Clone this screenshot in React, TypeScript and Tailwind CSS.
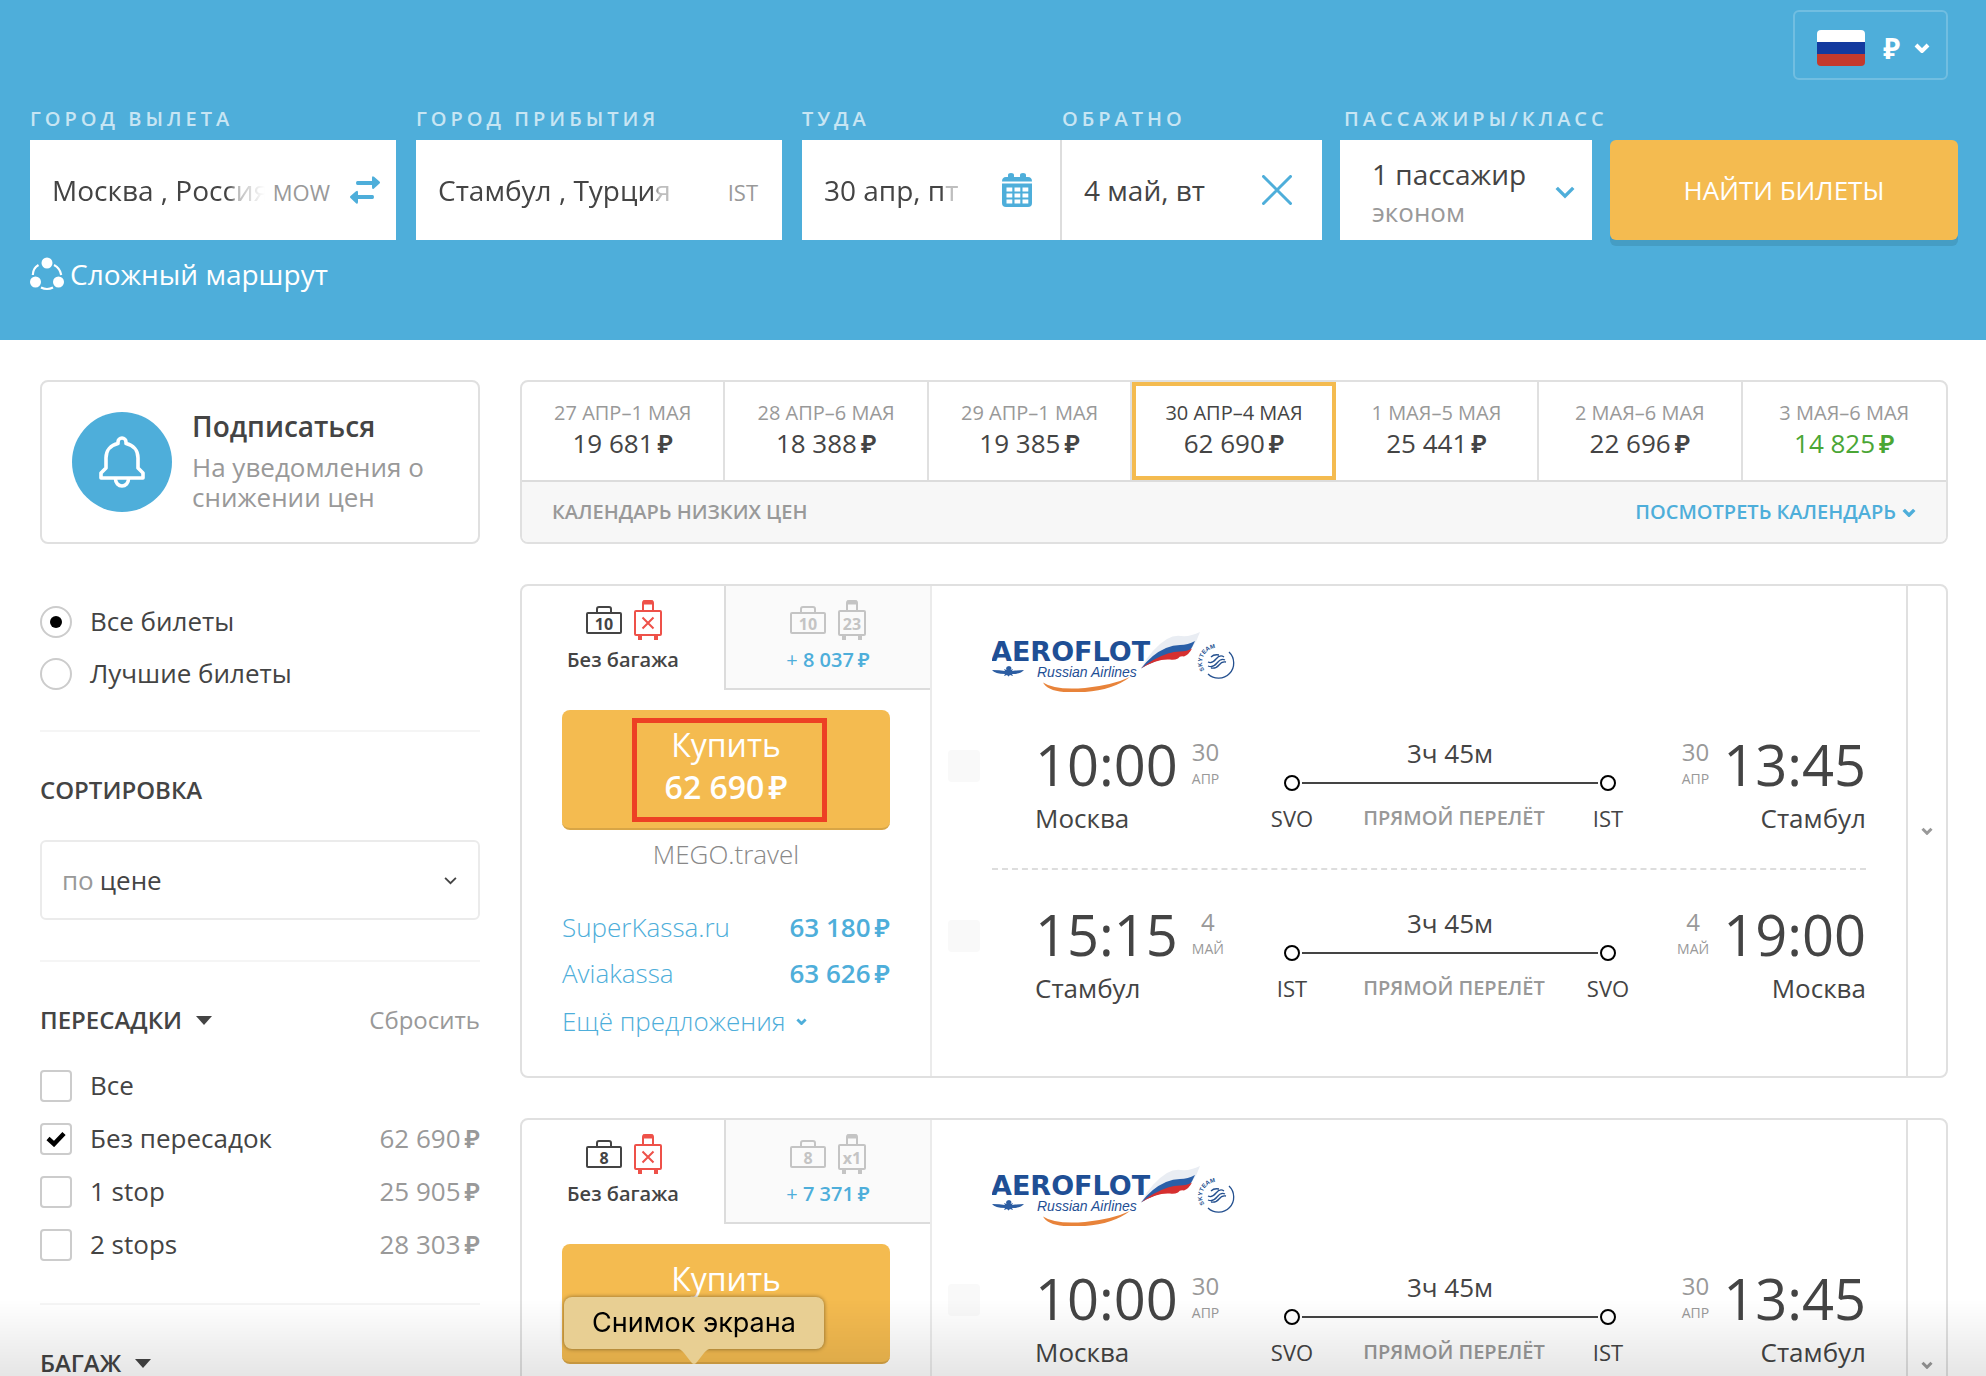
import React, { FC, ReactNode, useState } from "react";

interface IPrice {
	value: string;
	className?: string;
}

interface IBaggage {
	hand: string;
	bag: string;
	extra: string;
}

interface ILeg {
	from: string;
	to: string;
	fromCode: string;
	toCode: string;
	depart: string;
	arrive: string;
	day: string;
	month: string;
}

const CALENDAR = [
	{ dates: "27 АПР–1 МАЯ", price: "19 681" },
	{ dates: "28 АПР–6 МАЯ", price: "18 388" },
	{ dates: "29 АПР–1 МАЯ", price: "19 385" },
	{ dates: "30 АПР–4 МАЯ", price: "62 690" },
	{ dates: "1 МАЯ–5 МАЯ", price: "25 441" },
	{ dates: "2 МАЯ–6 МАЯ", price: "22 696" },
	{ dates: "3 МАЯ–6 МАЯ", price: "14 825", best: true },
];

const STOPS = [
	{ id: "all", label: "Все", price: "" },
	{ id: "direct", label: "Без пересадок", price: "62 690" },
	{ id: "one", label: "1 stop", price: "25 905" },
	{ id: "two", label: "2 stops", price: "28 303" },
];

const LEGS: ILeg[] = [
	{
		from: "Москва",
		to: "Стамбул",
		fromCode: "SVO",
		toCode: "IST",
		depart: "10:00",
		arrive: "13:45",
		day: "30",
		month: "АПР",
	},
	{
		from: "Стамбул",
		to: "Москва",
		fromCode: "IST",
		toCode: "SVO",
		depart: "15:15",
		arrive: "19:00",
		day: "4",
		month: "МАЙ",
	},
];

const Price: FC<IPrice> = ({ value, className = "" }) => (
	<span className={`whitespace-nowrap ${className}`}>
		{value}
		<span className="ml-1 font-semibold">₽</span>
	</span>
);

const Chevron: FC<{ className: string; width?: number }> = ({ className, width = 4 }) => (
	<svg viewBox="0 0 16 10" className={className} fill="none" stroke="currentColor" strokeWidth={width} aria-hidden="true">
		<path d="M2 2l6 6 6-6" />
	</svg>
);

const SwapIcon = () => (
	<svg viewBox="0 0 30 28" className="h-7 w-[30px] shrink-0 fill-[#4eaeda]" aria-hidden="true">
		<path d="M7.500 5H22V2q0-3 2-1.200l5.500 4.700q1 1 0 2L24 12.500q-2 1.500-2-1.500V9H7.500q-1.500 0-1.500-2t1.500-2z" />
		<path d="M22.500 19H8v-2.500q0-3-2-1.200L.5 20q-1 1 0 2L6 27.200q2 1.500 2-1.500V23h14.500q1.500 0 1.500-2t-1.500-2z" />
	</svg>
);

const CalendarIcon = () => (
	<svg viewBox="0 0 30 34" className="h-[34px] w-[30px] shrink-0" aria-hidden="true">
		<path fill="#4eaeda" d="M6 4V2q0-2 3-2t3 2v2h6V2q0-2 3-2t3 2v2h2q4 0 4 4.500H0Q0 4 4 4z" />
		<path fill="#4eaeda" d="M0 10.500h30V30q0 4-4 4H4q-4 0-4-4z" />
		{[14.5, 20.5, 26.5].map((y) =>
			[4.5, 12.5, 20.5].map((x) => <rect key={`${x}-${y}`} x={x} y={y} width="5.8" height="4" fill="#fff" />)
		)}
	</svg>
);

const HandBag: FC<{ text: string; className: string }> = ({ text, className }) => (
	<svg viewBox="0 0 36 40" className={`h-10 w-9 ${className}`} aria-hidden="true">
		<path d="M11 13V9q0-2 2-2h10q2 0 2 2v4" fill="none" stroke="currentColor" strokeWidth="2" />
		<rect x="1" y="13" width="34" height="20" rx="1" fill="none" stroke="currentColor" strokeWidth="2" />
		<text x="18" y="29.500" textAnchor="middle" fontSize="16" fontWeight="700" fill="currentColor">
			{text}
		</text>
	</svg>
);

const Suitcase: FC<{ text?: string; className: string }> = ({ text, className }) => (
	<svg viewBox="0 0 28 40" className={`h-10 w-7 ${className}`} aria-hidden="true">
		<path d="M9 11V3q0-2 2-2h6q2 0 2 2v8" fill="none" stroke="currentColor" strokeWidth="2" />
		<path d="M9 2.500h10M6 35.500v4.500M22 35.500v4.500" stroke="currentColor" strokeWidth="4" />
		<rect x="1" y="11" width="26" height="24" rx="1" fill="none" stroke="currentColor" strokeWidth="2" />
		{text ? (
			<text x="14" y="29.500" textAnchor="middle" fontSize="16" fontWeight="700" fill="currentColor">
				{text}
			</text>
		) : (
			<path d="M8.500 17.500l11 11m0-11l-11 11" stroke="currentColor" strokeWidth="2" />
		)}
	</svg>
);

const AeroflotLogo = () => (
	<svg viewBox="0 0 244 60" className="h-[60px] w-[244px]" role="img" aria-label="Aeroflot">
		<defs>
			<path id="skyteam-arc" d="M212.500 38A13 13 0 0 1 236 22.500" />
		</defs>
		<text x="-1" y="28.500" fontFamily="DejaVu Sans" fontWeight="700" fontSize="27" fill="#1f4f95">
			AEROFLOT
		</text>
		<text x="45" y="44.500" fontFamily="Liberation Sans" fontStyle="italic" fontSize="14" fill="#1f4f95">
			Russian Airlines
		</text>
		<path d="M51 50.500q12 8 42 5.500 28-3 45-11-17 13-45 15-36 2.500-42-9.500z" fill="#e8833a" />
		<path d="M149 36.500Q160 16 175 7q7-4 14-3 9 1 19-4-3 9-8 16l-21 6q-16 4-30 14.500z" fill="#e9edf3" />
		<path d="M149 36.500Q160 22 174 16q7-3 14-3 8 0 15-4-3 7-6 11l-18 5q-17 3-30 11.500z" fill="#2a5fa8" />
		<path d="M149 36.500Q162 26 176 21.500q6-2 12-2 7 0 12-3-3 6-8 8-4-1-6 2-4 2-8 1-13-1-29 9z" fill="#d62f2f" />
		<path
			d="M0 38q8 0 13 1l-1-2 2.500 1Q13 34.500 17 34q4 1 1.500 4l2.500-1-1 2q6-1 12-1-3 4-12 4l1 2-3-1-1.500 1.500L15 43l-3 1 1-2Q3 42 0 38z"
			fill="#2c5da2"
		/>
		<path d="M237 20a15 15 0 0 1-21 22" fill="none" stroke="#24508f" strokeWidth="1.300" />
		<text fontFamily="Liberation Sans" fontWeight="700" fontSize="6" fill="#24508f">
			<textPath href="#skyteam-arc">SKYTEAM</textPath>
		</text>
		<path
			d="M216 30q4 2 8-3t8-2m-16 9q5 2 9-3t8-3m-14 8q5 1 8-3t7-3m-15-5q3-3 8-2"
			fill="none"
			stroke="#24508f"
			strokeWidth="1.300"
		/>
	</svg>
);

const FieldLabel: FC<{ htmlFor: string; children: ReactNode }> = ({ htmlFor, children }) => (
	<label
		htmlFor={htmlFor}
		className="mb-[7px] block text-[20px] leading-7 font-semibold tracking-[4px] whitespace-nowrap text-white/70"
	>
		{children}
	</label>
);

const Header = () => (
	<header className="bg-[#4eaeda] pt-[10px] pr-7 pb-12 pl-[30px]">
		<div className="flex justify-end pr-[10px]">
			<button
				type="button"
				aria-label="Страна и валюта"
				className="flex h-[70px] items-center rounded-md border-2 border-white/20 pt-1.5 pr-4 pl-[22px] text-white"
			>
				<svg viewBox="0 0 48 36" className="mr-[18px] h-9 w-12 rounded" aria-hidden="true">
					<path d="M0 0h48v12H0z" fill="#fff" />
					<path d="M0 12h48v12H0z" fill="#133a9f" />
					<path d="M0 24h48v12H0z" fill="#c43a2d" />
				</svg>
				<span className="mr-[14px] text-[28px] leading-9 font-bold">₽</span>
				<Chevron className="h-[10px] w-4" />
			</button>
		</div>

		<form className="mt-[25px] grid grid-cols-[1292fr_252fr_348fr] gap-x-[18px]">
			<div className="grid grid-cols-[366fr_366fr_520fr] gap-x-5">
				<div className="min-w-0">
					<FieldLabel htmlFor="from">ГОРОД ВЫЛЕТА</FieldLabel>
					<div className="flex h-[100px] items-center bg-white pr-4 pl-[22px]">
						<input
							id="from"
							defaultValue="Москва , Россия"
							className="w-full min-w-0 flex-1 text-[28px] outline-none [mask-image:linear-gradient(to_right,black_calc(100%-38px),rgb(0_0_0/0.35)_calc(100%-26px),transparent)]"
						/>
						<span className="ml-2 pt-1 text-[22px] text-[#999]">MOW</span>
						<button type="button" aria-label="Поменять местами" className="ml-5">
							<SwapIcon />
						</button>
					</div>
				</div>
				<div className="min-w-0">
					<FieldLabel htmlFor="to">ГОРОД ПРИБЫТИЯ</FieldLabel>
					<div className="flex h-[100px] items-center bg-white pr-6 pl-[22px]">
						<input
							id="to"
							defaultValue="Стамбул , Турция"
							className="w-full min-w-0 flex-1 text-[28px] outline-none [mask-image:linear-gradient(to_right,black_calc(100%-60px),rgb(0_0_0/0.35)_calc(100%-58px))]"
						/>
						<span className="ml-3 pt-1 text-[22px] text-[#999]">IST</span>
					</div>
				</div>
				<div className="grid min-w-0 grid-cols-2">
					<div className="min-w-0">
						<FieldLabel htmlFor="there">ТУДА</FieldLabel>
						<div className="flex h-[100px] items-center border-r-2 border-[#ddd] bg-white pr-7 pl-[22px]">
							<input
								id="there"
								defaultValue="30 апр, пт"
								className="w-full min-w-0 flex-1 text-[28px] outline-none [mask-image:linear-gradient(to_right,black_calc(100%-58px),rgb(0_0_0/0.35)_calc(100%-56px))]"
							/>
							<CalendarIcon />
						</div>
					</div>
					<div className="min-w-0">
						<FieldLabel htmlFor="back">ОБРАТНО</FieldLabel>
						<div className="flex h-[100px] items-center bg-white pr-[30px] pl-[22px]">
							<input
								id="back"
								defaultValue="4 май, вт"
								className="w-full min-w-0 flex-1 text-[28px] outline-none"
							/>
							<button type="button" aria-label="Очистить">
								<svg viewBox="0 0 30 30" className="size-[30px]" aria-hidden="true">
									<path
										d="M1.500 1.500l27 27m0-27l-27 27"
										stroke="#4eaeda"
										strokeWidth="3"
										strokeLinecap="round"
									/>
								</svg>
							</button>
						</div>
					</div>
				</div>
			</div>

			<div className="min-w-0">
				<div className="pl-1">
					<FieldLabel htmlFor="passengers">ПАССАЖИРЫ/КЛАСС</FieldLabel>
				</div>
				<button
					id="passengers"
					type="button"
					className="flex h-[100px] w-full items-center justify-between bg-white pt-1 pr-4 pl-8 text-left"
				>
					<span>
						<span className="block text-[28px] leading-10">1 пассажир</span>
						<span className="block text-[26px] leading-9 text-[#999]">эконом</span>
					</span>
					<Chevron className="h-[14px] w-[22px] text-[#4eaeda]" width={2.5} />
				</button>
			</div>

			<button
				type="submit"
				className="mt-[35px] h-[100px] rounded-md bg-[#f4bb50] text-[26px] text-white shadow-[0_6px_0_#459dc4]"
			>
				НАЙТИ БИЛЕТЫ
			</button>
		</form>

		<a href="#multi" className="mt-4 flex w-fit items-center text-[28px] leading-9 text-white">
			<svg viewBox="0 0 34 34" className="mr-1.5 h-[34px] w-[34px]" aria-hidden="true">
				<circle cx="17" cy="6" r="5.500" fill="#fff" />
				<circle cx="5.500" cy="25" r="5.500" fill="#fff" />
				<circle cx="28.500" cy="25" r="5.500" fill="#fff" />
				<path
					d="M8.500 8Q3 11 2.800 18M24 8q6 3 7.200 10M11 30.500q6 3 12 0"
					fill="none"
					stroke="#fff"
					strokeWidth="2.200"
				/>
			</svg>
			Сложный маршрут
		</a>
	</header>
);

const Section: FC<{ children: ReactNode }> = ({ children }) => (
	<section className="mt-10 border-t-2 border-[#f5f5f5] pt-[42px]">{children}</section>
);

const Triangle = () => (
	<svg viewBox="0 0 16 9" className="ml-[14px] h-[9px] w-4 fill-current" aria-hidden="true">
		<path d="M0 0h16L8 9z" />
	</svg>
);

const Sidebar = () => {
	const [mode, setMode] = useState<string>("all");
	const [stops, setStops] = useState<string[]>(["direct"]);

	const toggleStop = (id: string) => {
		setStops(stops.includes(id) ? stops.filter((s) => s !== id) : [...stops, id]);
	};

	return (
		<aside className="w-[440px] shrink-0 text-[26px]">
			<button
				type="button"
				className="flex h-[164px] w-full items-center gap-5 rounded-lg border-2 border-[#e0e0e0] pl-[30px] text-left"
			>
				<span className="flex size-[100px] shrink-0 items-center justify-center rounded-full bg-[#4eaeda]">
					<svg viewBox="0 0 46 52" className="h-[52px] w-[46px]" fill="none" stroke="#fff" strokeWidth="3.600" aria-hidden="true">
						<path
							strokeLinejoin="round"
							d="M2 42v-5l5-5V22C7 14 12 9 19 7.500V6a4 4 0 0 1 8 0v1.500C34 9 39 14 39 22v10l5 5v5z"
						/>
						<path d="M16.500 43a6.500 7 0 0 0 13 0" />
					</svg>
				</span>
				<span className="pb-1">
					<span className="block text-[28px] leading-9 font-semibold">Подписаться</span>
					<span className="mt-2 block leading-[30px] text-[#999]">
						На уведомления о<br />
						снижении цен
					</span>
				</span>
			</button>

			<div className="mt-[62px] flex flex-col gap-5">
				{[
					{ id: "all", label: "Все билеты" },
					{ id: "best", label: "Лучшие билеты" },
				].map((item) => (
					<label key={item.id} className="flex h-8 items-center">
						<input
							type="radio"
							name="mode"
							checked={mode === item.id}
							onChange={() => setMode(item.id)}
							className="mr-[18px] grid size-8 appearance-none place-content-center rounded-full border-2 border-[#ccc] before:size-3 before:rounded-full checked:before:bg-black"
						/>
						<span className="pb-0.5">{item.label}</span>
					</label>
				))}
			</div>

			<Section>
				<h2 className="text-[24px] leading-8 font-semibold">СОРТИРОВКА</h2>
				<div className="relative mt-[34px] flex h-20 items-center rounded-md border-2 border-[#ebebeb] pl-5">
					<label htmlFor="sort" className="text-[#999]">
						по
					</label>
					<select id="sort" className="h-full flex-1 appearance-none pl-1.5 outline-none">
						<option>цене</option>
					</select>
					<Chevron className="pointer-events-none absolute right-5 h-[9px] w-[15px]" width={2} />
				</div>
			</Section>

			<Section>
				<div className="flex items-center leading-8">
					<h2 className="text-[24px] font-semibold">ПЕРЕСАДКИ</h2>
					<Triangle />
					<button type="button" className="ml-auto text-[24px] text-[#999]">
						Сбросить
					</button>
				</div>
				<div className="mt-[34px] flex flex-col gap-[21px] pb-0.5">
					{STOPS.map((stop) => (
						<label key={stop.id} className="relative flex h-8 items-center">
							<input
								type="checkbox"
								checked={stops.includes(stop.id)}
								onChange={() => toggleStop(stop.id)}
								className="peer mr-[18px] size-8 appearance-none rounded border-2 border-[#ccc]"
							/>
							<svg
								viewBox="0 0 20 16"
								className="absolute left-1.5 hidden h-4 w-5 peer-checked:block"
								fill="none"
								stroke="#000"
								strokeWidth="4.500"
								aria-hidden="true"
							>
								<path d="M2 7.500l6 5.500L18 2.500" />
							</svg>
							<span className="pb-0.5">{stop.label}</span>
							{stop.price && <Price value={stop.price} className="ml-auto pb-0.5 text-[#999]" />}
						</label>
					))}
				</div>
			</Section>

			<Section>
				<div className="flex items-center leading-8">
					<h2 className="text-[24px] font-semibold">БАГАЖ</h2>
					<Triangle />
				</div>
			</Section>
		</aside>
	);
};

const PriceCalendar = () => {
	const [selected, setSelected] = useState<number>(3);

	return (
		<section className="flex h-[164px] flex-col overflow-hidden rounded-lg border-2 border-[#e0e0e0]">
			<div className="grid h-[100px] grid-cols-7 border-b-2 border-[#dcdcdc]">
				{CALENDAR.map((item, i) => (
					<button
						key={item.dates}
						type="button"
						onClick={() => setSelected(i)}
						className={
							i === selected
								? "border-4 border-[#f4bb50] pb-1"
								: "border-r-2 border-[#e0e0e0] pb-1 last:border-r-0"
						}
					>
						<span className={`block text-[20px] leading-7 ${i === selected ? "" : "text-[#999]"}`}>{item.dates}</span>
						<Price value={item.price} className={`block text-[26px] leading-8 ${item.best ? "text-[#4aa635]" : ""}`} />
					</button>
				))}
			</div>
			<div className="flex flex-1 items-center justify-between bg-[#f7f7f7] px-[30px] text-[20px] font-semibold">
				<h2 className="text-[#999]">КАЛЕНДАРЬ НИЗКИХ ЦЕН</h2>
				<a href="#calendar" className="flex items-center gap-1.5 text-[#4eaeda]">
					ПОСМОТРЕТЬ КАЛЕНДАРЬ
					<Chevron className="h-[9px] w-[14px]" />
				</a>
			</div>
		</section>
	);
};

const DateMark: FC<{ day: string; month: string }> = ({ day, month }) => (
	<span className="text-center text-[#999]">
		<span className="block text-[24px] leading-[30px]">{day}</span>
		<span className="block text-[14px] leading-6">{month}</span>
	</span>
);

const Leg: FC<{ leg: ILeg }> = ({ leg }) => (
	<div className="flex">
		<div className="mt-[18px] mr-[55px] size-8 shrink-0 rounded bg-[#f9f9f9]" />
		<div className="w-[227px]">
			<div className="flex h-16 items-center gap-[14px]">
				<span className="text-[56px] leading-[64px]">{leg.depart}</span>
				<DateMark day={leg.day} month={leg.month} />
			</div>
			<p className="mt-1 text-[26px] leading-9">{leg.from}</p>
		</div>
		<div className="flex-1">
			<div className="h-16 pt-[3px]">
				<p className="text-center text-[26px] leading-9">3ч 45м</p>
				<div className="mt-1 flex items-center gap-0.5 px-[22px]">
					<span className="size-4 rounded-full border-2 border-black" />
					<span className="h-0.5 flex-1 bg-[#444]" />
					<span className="size-4 rounded-full border-2 border-black" />
				</div>
			</div>
			<div className="mt-1 grid grid-cols-[60px_1fr_60px] text-center text-[22px] leading-9">
				<span>{leg.fromCode}</span>
				<span className="pl-2 text-[20px] font-semibold text-[#999]">ПРЯМОЙ ПЕРЕЛЁТ</span>
				<span>{leg.toCode}</span>
			</div>
		</div>
		<div className="w-[228px]">
			<div className="flex h-16 items-center justify-end gap-[14px]">
				<DateMark day={leg.day} month={leg.month} />
				<span className="text-[56px] leading-[64px]">{leg.arrive}</span>
			</div>
			<p className="mt-1 text-right text-[26px] leading-9">{leg.to}</p>
		</div>
	</div>
);

const Ticket: FC<{ baggage: IBaggage; marked?: boolean }> = ({ baggage, marked }) => (
	<article className="flex rounded-lg border-2 border-[#e0e0e0]">
		<div className="w-[410px] shrink-0 border-r-2 border-[#ebebeb]">
			<div className="grid h-[104px] grid-cols-[202px_1fr] text-[20px] leading-6">
				<button type="button" className="flex flex-col items-center pt-[14px]">
					<span className="flex gap-3 pl-0.5">
						<HandBag text={baggage.hand} className="text-[#444]" />
						<Suitcase className="text-[#ee5149]" />
					</span>
					<span className="mt-2 font-semibold">Без багажа</span>
				</button>
				<button
					type="button"
					className="flex flex-col items-center border-b-2 border-l-2 border-[#dcdcdc] bg-[#fafafa] pt-[14px]"
				>
					<span className="flex gap-3 text-[#c4c4c4]">
						<HandBag text={baggage.hand} className="" />
						<Suitcase text={baggage.bag} className="" />
					</span>
					<span className="mt-2 text-[#4eaeda]">
						+ <Price value={baggage.extra} className="font-semibold" />
					</span>
				</button>
			</div>

			<div className="px-10 pt-5">
				<button
					type="button"
					className="relative block h-[120px] w-full rounded-lg border-b-2 border-[#d8a546] bg-[#f4bb50] pb-1.5 text-[32px] leading-[42px] text-white"
				>
					<span className="block">Купить</span>
					<Price value="62 690" className="block font-semibold" />
					{marked && <span className="absolute top-2 left-[70px] h-[104px] w-[195px] border-5 border-[#ed4024]" />}
				</button>
				<p className="mt-1.5 text-center text-[26px] leading-9 font-light text-[#888]">MEGO.travel</p>
				<ul className="mt-8 text-[26px] leading-[46px] text-[#4eaeda]">
					<li>
						<a href="#superkassa" className="flex justify-between">
							<span className="font-light">SuperKassa.ru</span>
							<Price value="63 180" className="font-semibold" />
						</a>
					</li>
					<li>
						<a href="#aviakassa" className="flex justify-between">
							<span className="font-light">Aviakassa</span>
							<Price value="63 626" className="font-semibold" />
						</a>
					</li>
					<li className="pt-0.5">
						<button type="button" className="flex items-center gap-[10px] font-light">
							Ещё предложения
							<Chevron className="h-[7px] w-[11px]" />
						</button>
					</li>
				</ul>
			</div>
		</div>

		<div className="flex-1 pt-[46px] pr-10 pb-[70px] pl-4">
			<div className="mb-10 ml-11">
				<AeroflotLogo />
			</div>
			<Leg leg={LEGS[0]} />
			<div className="my-8 ml-11 border-t-2 border-dashed border-[#ddd]" />
			<Leg leg={LEGS[1]} />
		</div>

		<button
			type="button"
			aria-label="Подробнее"
			className="flex w-10 shrink-0 items-center justify-center border-l-2 border-[#e0e0e0] text-[#999]"
		>
			<Chevron className="h-2 w-3" />
		</button>
	</article>
);

// подсказка дока поверх страницы
const DockTooltip = () => (
	<div className="fixed bottom-[27px] left-[564px] flex h-[52px] w-[260px] items-center justify-center rounded-lg bg-[#e8cf93] font-[Inter,sans-serif] text-[27px] text-black shadow-[0_0_4px_rgba(0,0,0,0.45)]">
		Снимок экрана
		<svg viewBox="0 0 36 18" className="absolute top-[51px] left-[112px] h-[18px] w-9" aria-hidden="true">
			<path d="M0 0h36q-5 1-8 5l-7 9q-3 4-6 0L8 5Q5 1 0 0z" fill="#e8cf93" />
		</svg>
	</div>
);

const App = () => {
	return (
		<div className="h-screen overflow-hidden bg-white font-['Open_Sans','Noto_Sans',sans-serif] text-[#444]">
			<Header />
			<main className="flex gap-10 pt-10 pr-[38px] pl-10">
				<Sidebar />
				<div className="flex min-w-0 flex-1 flex-col gap-10">
					<PriceCalendar />
					<Ticket baggage={{ hand: "10", bag: "23", extra: "8 037" }} marked />
					<Ticket baggage={{ hand: "8", bag: "x1", extra: "7 371" }} />
				</div>
			</main>
			<div className="pointer-events-none fixed inset-x-0 bottom-0 h-[76px] bg-linear-to-b from-transparent to-black/10" />
			<DockTooltip />
		</div>
	);
};

export default App;
